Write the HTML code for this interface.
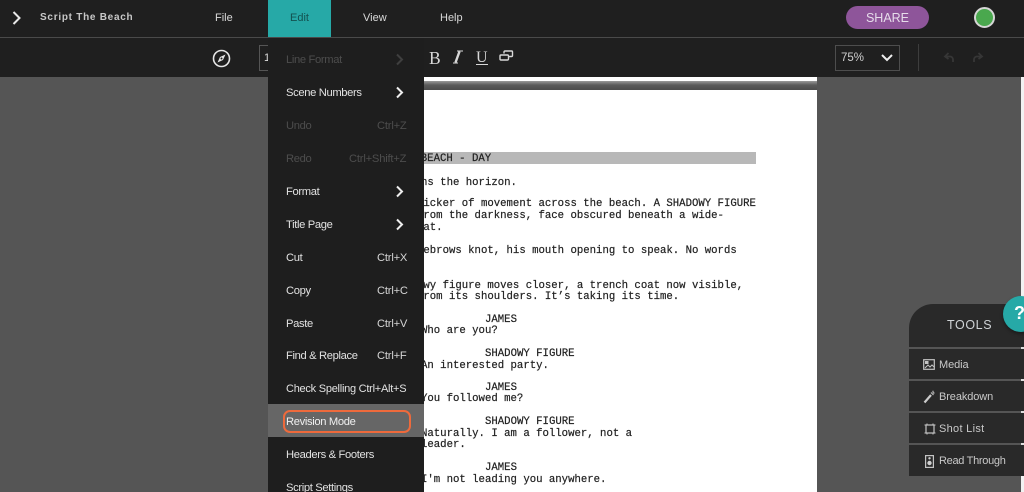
<!DOCTYPE html>
<html><head><meta charset="utf-8">
<style>
html,body{margin:0;padding:0;width:1024px;height:492px;overflow:hidden;background:#555}
body{position:relative;font-family:"Liberation Sans",sans-serif;}
div,span,svg{position:absolute}
.t{white-space:nowrap;color:#d8d8d8;font-size:11px;line-height:14px;transform-origin:0 50%}
.m{left:286px;color:#e2e2e2;font-size:11.2px;letter-spacing:-.35px;line-height:14px;white-space:nowrap}
.k{color:#d5d5d5;font-size:11.2px;letter-spacing:-.2px;line-height:14px;white-space:nowrap}
.c{font-family:"Liberation Mono",monospace;font-size:10.67px;line-height:12px;color:#222;white-space:pre;-webkit-text-stroke:.2px #222}
.d{left:909px;width:115px;height:2px;background:#555}
.d:after{content:"";position:absolute;right:0;top:0;width:3px;height:2px;background:#ddd}
.l{left:939px;color:#c9c9c9;font-size:11px;letter-spacing:-.1px;line-height:14px;white-space:nowrap}
</style></head><body>

<!-- page -->
<div style="left:0;top:77px;width:1024px;height:415px;background:#555"></div>
<div style="left:1021px;top:77px;width:3px;height:415px;background:#f2f2f2"></div>
<div style="left:400px;top:77px;width:417px;height:4px;background:#fff"></div>
<div style="left:400px;top:81px;width:417px;height:9px;background:linear-gradient(#9a9a9a,#5a5a5a 45%,#4c4c4c)"></div>
<div style="left:400px;top:90px;width:417px;height:402px;background:#fff"></div>
<div style="left:400px;top:152px;width:356px;height:12px;background:#b8b8b8"></div>

<div class="c" style="left:408px;top:153px">H BEACH - DAY</div>
<div class="c" style="left:421px;top:177px">ns the horizon.</div>
<div class="c" style="left:417px;top:198px">licker of movement across the beach. A SHADOWY FIGURE</div>
<div class="c" style="left:417px;top:210px">from the darkness, face obscured beneath a wide-</div>
<div class="c" style="left:417px;top:222px">hat.</div>
<div class="c" style="left:417px;top:245px">yebrows knot, his mouth opening to speak. No words</div>
<div class="c" style="left:417px;top:280px">owy figure moves closer, a trench coat now visible,</div>
<div class="c" style="left:417px;top:291px">from its shoulders. It’s taking its time.</div>
<div class="c" style="left:485px;top:314px">JAMES</div>
<div class="c" style="left:421px;top:325px">Who are you?</div>
<div class="c" style="left:485px;top:348px">SHADOWY FIGURE</div>
<div class="c" style="left:421px;top:360px">An interested party.</div>
<div class="c" style="left:485px;top:382px">JAMES</div>
<div class="c" style="left:421px;top:393px">You followed me?</div>
<div class="c" style="left:485px;top:416px">SHADOWY FIGURE</div>
<div class="c" style="left:421px;top:428px">Naturally. I am a follower, not a</div>
<div class="c" style="left:421px;top:439px">leader.</div>
<div class="c" style="left:485px;top:462px">JAMES</div>
<div class="c" style="left:421px;top:474px">I'm not leading you anywhere.</div>

<!-- top bars -->
<div style="left:0;top:0;width:1024px;height:77px;background:#1f1f1f"></div>
<div style="left:0;top:37px;width:1024px;height:1px;background:#4a4a4a"></div>
<div style="left:268px;top:0;width:63px;height:37px;background:#26a9a7"></div>

<svg style="left:11px;top:10px" width="12" height="16" viewBox="0 0 12 16"><path d="M2.5 2l6 6-6 6" fill="none" stroke="#e8e8e8" stroke-width="2"/></svg>
<div class="t" style="left:40px;top:11px;font-weight:bold;letter-spacing:.73px;font-size:10px;color:#c8c8c8">Script The Beach</div>
<div class="t" style="left:215px;top:11px;">File</div>
<div class="t" style="left:290px;top:11px;color:#135250">Edit</div>
<div class="t" style="left:363px;top:11px;">View</div>
<div class="t" style="left:440px;top:11px;">Help</div>

<div style="left:846px;top:6px;width:83px;height:23px;border-radius:12px;background:#8e559a"></div>
<div style="left:846px;top:6px;width:83px;text-align:center;line-height:24px;font-size:12.5px;color:#e6dcea">SHARE</div>
<div style="left:974px;top:7px;width:17px;height:17px;border:2px solid #d6d6d6;border-radius:50%;background:#4aa84e"></div>

<!-- toolbar -->
<svg style="left:212px;top:49px" width="19" height="19" viewBox="0 0 19 19"><circle cx="9.5" cy="9.5" r="8" fill="none" stroke="#e6e6e6" stroke-width="1.6"/><path d="M13.5 5.5L11 11 5.5 13.5 8 8z" fill="#e6e6e6"/><circle cx="9.5" cy="9.500" r="1" fill="#1f1f1f"/></svg>
<div style="left:259px;top:45px;width:9px;height:24px;border:1px solid #555;border-right:0"></div>
<div class="t" style="left:264px;top:51px;color:#ddd">1</div>

<div style="left:429px;top:48px;font-family:'Liberation Serif',serif;font-size:17.5px;line-height:20px;color:#d8d8d8">B</div>
<svg style="left:452px;top:50px" width="12" height="14" viewBox="0 0 12 14"><path d="M7.500 1.500L3.500 12.500" stroke="#d8d8d8" stroke-width="2.400" fill="none"/><path d="M5 1h6M1 13h5" stroke="#d8d8d8" stroke-width="1" fill="none"/></svg>
<div style="left:476px;top:48px;font-family:'Liberation Serif',serif;font-size:16px;line-height:20px;color:#d8d8d8">U</div>
<div style="left:476px;top:64px;width:12px;height:1px;background:#d8d8d8"></div>
<svg style="left:499px;top:49px" width="15" height="15" viewBox="0 0 15 15"><path d="M5 4.500V3a1 1 0 0 1 1-1h6.500a1 1 0 0 1 1 1v3.500a1 1 0 0 1-1 1H9.500M2 6h6.500a1 1 0 0 1 1 1v3a1 1 0 0 1-1 1H2a1 1 0 0 1-1-1V7a1 1 0 0 1 1-1z" fill="none" stroke="#d8d8d8" stroke-width="1.400"/></svg>

<div style="left:835px;top:45px;width:63px;height:24px;border:1px solid #4d4d4d"></div>
<div class="t" style="left:841px;top:51px;font-size:11.500px;color:#cfcfcf">75%</div>
<svg style="left:880px;top:53px" width="14" height="10" viewBox="0 0 14 10"><path d="M2 2l5 5 5-5" fill="none" stroke="#eee" stroke-width="2"/></svg>
<div style="left:918px;top:44px;width:1px;height:27px;background:#3d3d3d"></div>
<svg style="left:943px;top:51px" width="13" height="13" viewBox="0 0 13 13"><path d="M5.500 2L2 5.500 5.500 8M2 5.500h5a3 3 0 0 1 3 3V11" fill="none" stroke="#363636" stroke-width="1.800"/></svg>
<svg style="left:971px;top:51px" width="13" height="13" viewBox="0 0 13 13"><path d="M7.500 2L11 5.500 7.500 8M11 5.500H6a3 3 0 0 0-3 3V11" fill="none" stroke="#363636" stroke-width="1.800"/></svg>

<!-- edit menu -->
<div style="left:268px;top:38px;width:156px;height:454px;background:#1e1e1e"></div>
<div style="left:268px;top:404px;width:156px;height:33px;background:#666"></div>
<div style="left:283px;top:410px;width:124px;height:19px;border:2px solid #ee6a3c;border-radius:7px"></div>

<div class="m" style="top:53px;color:#4d4d4d">Line Format</div>
<svg style="left:395px;top:53px" width="10" height="13" viewBox="0 0 10 13"><path d="M2 1.500l5 5-5 5" fill="none" stroke="#3f3f3f" stroke-width="2"/></svg>
<div class="m" style="top:86px">Scene Numbers</div>
<svg style="left:395px;top:86px" width="10" height="13" viewBox="0 0 10 13"><path d="M2 1.500l5 5-5 5" fill="none" stroke="#eee" stroke-width="2"/></svg>
<div class="m" style="top:119px;color:#4d4d4d">Undo</div><div class="k" style="left:377px;top:119px;color:#4d4d4d">Ctrl+Z</div>
<div class="m" style="top:152px;color:#4d4d4d">Redo</div><div class="k" style="left:349px;top:152px;color:#4d4d4d">Ctrl+Shift+Z</div>
<div class="m" style="top:185px">Format</div>
<svg style="left:395px;top:185px" width="10" height="13" viewBox="0 0 10 13"><path d="M2 1.500l5 5-5 5" fill="none" stroke="#eee" stroke-width="2"/></svg>
<div class="m" style="top:218px">Title Page</div>
<svg style="left:395px;top:218px" width="10" height="13" viewBox="0 0 10 13"><path d="M2 1.500l5 5-5 5" fill="none" stroke="#eee" stroke-width="2"/></svg>
<div class="m" style="top:251px">Cut</div><div class="k" style="left:377px;top:251px">Ctrl+X</div>
<div class="m" style="top:284px">Copy</div><div class="k" style="left:377px;top:284px">Ctrl+C</div>
<div class="m" style="top:317px">Paste</div><div class="k" style="left:377px;top:317px">Ctrl+V</div>
<div class="m" style="top:349px">Find &amp; Replace</div><div class="k" style="left:377px;top:349px">Ctrl+F</div>
<div class="m" style="top:382px;font-size:11px;letter-spacing:-.25px">Check Spelling Ctrl+Alt+S</div>
<div class="m" style="top:415px;color:#f0f0f0">Revision Mode</div>
<div class="m" style="top:448px">Headers &amp; Footers</div>
<div class="m" style="top:481px">Script Settings</div>

<!-- tools -->
<div style="left:909px;top:304px;width:115px;height:172px;background:#292929;border-top-left-radius:24px"></div>
<div style="left:947px;top:317px;font-size:12.500px;line-height:16px;letter-spacing:.6px;color:#cfd3d6">TOOLS</div>
<div class="d" style="top:347px"></div>
<div class="d" style="top:379px"></div>
<div class="d" style="top:411px"></div>
<div class="d" style="top:443px"></div>
<div style="left:1003px;top:296px;width:36px;height:36px;border-radius:50%;background:#26a9a7;box-shadow:0 2px 3px rgba(0,0,0,.35)"></div>
<div style="left:1014px;top:302px;font-size:18px;line-height:22px;font-weight:bold;color:#fff">?</div>

<svg style="left:923px;top:359px" width="12" height="11" viewBox="0 0 12 11"><rect x=".7" y=".7" width="10.600" height="9.600" fill="none" stroke="#c4c4c4" stroke-width="1.200"/><rect x="2" y="2" width="3.500" height="3" fill="#c4c4c4"/><path d="M2 9l3-3 2 2 2-2 2 2" fill="none" stroke="#c4c4c4"/></svg>
<div class="l" style="top:358px">Media</div>
<svg style="left:923px;top:390px" width="12" height="14" viewBox="0 0 12 14"><path d="M1.500 12.500L8 5" stroke="#ccc" stroke-width="2.200" fill="none"/><path d="M8 2.500l2.500 2.500M10 .8v2M11.500 3h-1.500" stroke="#bbb" stroke-width="1.200" fill="none"/></svg>
<div class="l" style="top:390px">Breakdown</div>
<svg style="left:924px;top:423px" width="12" height="12" viewBox="0 0 12 12"><rect x="2" y="2" width="8" height="8" fill="none" stroke="#c4c4c4" stroke-width="1.200"/><path d="M.5 2h2.500V.5M11.500 2H9V.5M.5 10h2.500v1.500M11.500 10H9v1.500" fill="none" stroke="#c4c4c4"/></svg>
<div class="l" style="top:422px;letter-spacing:.3px">Shot List</div>
<svg style="left:925px;top:455px" width="9" height="13" viewBox="0 0 9 13"><rect x=".6" y=".6" width="7.800" height="11.800" fill="#2a2a2a" stroke="#c4c4c4" stroke-width="1.200"/><circle cx="4.500" cy="8" r="2.200" fill="#d0d0d0"/><circle cx="4.500" cy="3.300" r="1.200" fill="#d0d0d0"/></svg>
<div class="l" style="top:454px;letter-spacing:-.3px">Read Through</div>

</body></html>
